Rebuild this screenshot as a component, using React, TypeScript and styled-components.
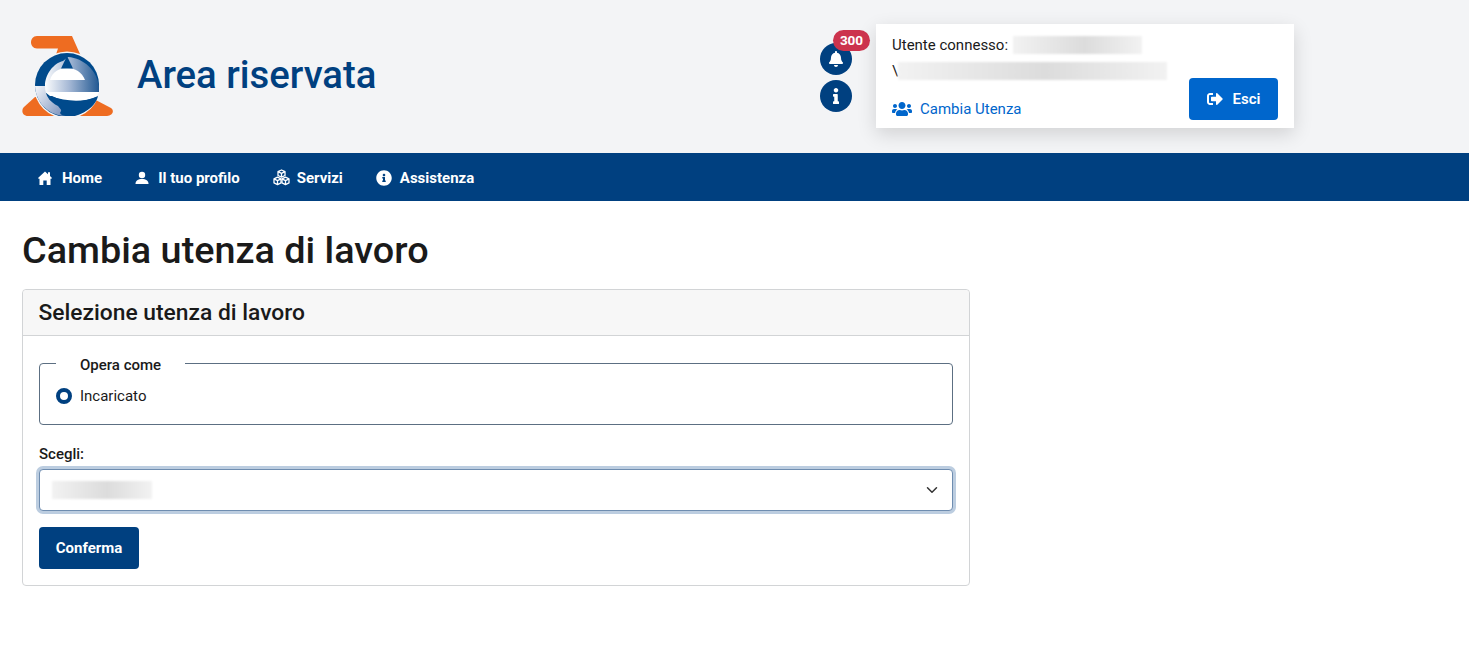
import React from "react";
import styled, { createGlobalStyle } from "styled-components";
import { FaBell, FaInfo, FaInfoCircle, FaSignOutAlt, FaUsers } from "react-icons/fa";
import { ChevronDown } from "lucide-react";

const NAVY = "#004080";
const BLUE = "#0066cc";
const INK = "#1a1a1a";

const GlobalStyle = createGlobalStyle`
  html, body {
    margin: 0;
    background: #fff;
    color: ${INK};
    font-family: "Roboto", "Liberation Sans", sans-serif;
    font-size: 16px;
  }
  * { box-sizing: border-box; }
`;

const Header = styled.header`
  height: 153px;
  background: #f3f4f6;
  display: grid;
  grid-template-columns: 798px 56px 418px;
  padding: 24px 0 0 22px;
`;

const Brand = styled.div`
  display: flex;
  align-items: flex-start;
  padding-top: 12px;
  gap: 24px;
`;

const SiteTitle = styled.h1`
  margin: 15px 0 0;
  font-size: 38.3px;
  line-height: 48px;
  font-weight: 500;
  color: ${NAVY};
`;

const Alerts = styled.div`
  display: flex;
  flex-direction: column;
  gap: 5px;
  padding-top: 19px;
`;

const RoundButton = styled.span`
  position: relative;
  width: 32px;
  height: 32px;
  border-radius: 50%;
  background: ${NAVY};
  color: #fff;
  display: flex;
  align-items: center;
  justify-content: center;
  font-size: 16px;
`;

const Badge = styled.span`
  position: absolute;
  left: 13px;
  top: -13px;
  width: 37px;
  height: 21px;
  border-radius: 11px;
  background: #cc334d;
  color: #fff;
  font-size: 13.5px;
  font-weight: 700;
  line-height: 21px;
  text-align: center;
`;

const UserPanel = styled.section`
  height: 104px;
  background: #fff;
  box-shadow: 0 6px 18px rgba(0, 0, 0, 0.14);
  padding: 9px 16px 8px;
  display: flex;
  justify-content: space-between;
  align-items: flex-end;
`;

const UserInfo = styled.div`
  display: flex;
  flex-direction: column;
  align-items: flex-start;
`;

const UserLine = styled.div<{ $tall?: boolean }>`
  display: flex;
  align-items: center;
  height: ${(p) => (p.$tall ? 30 : 22)}px;
  font-size: 15px;
  white-space: nowrap;
`;

const Redacted = styled.span<{ $w: number; $gap?: number }>`
  display: inline-block;
  width: ${(p) => p.$w}px;
  height: 18px;
  margin-left: ${(p) => p.$gap ?? 0}px;
  background: linear-gradient(90deg, #f2f2f2, #e6e6e6 30%, #dcdcdc 55%, #e8e8e8 80%, #f2f2f2);
  filter: blur(0.8px);
`;

const SwitchLink = styled.a`
  margin-top: 12px;
  display: flex;
  align-items: center;
  gap: 8px;
  color: ${BLUE};
  font-size: 15px;
  line-height: 22px;
`;

const ExitButton = styled.button`
  width: 89px;
  height: 42px;
  border: 0;
  border-radius: 4px;
  background: ${BLUE};
  color: #fff;
  font: 600 15px "Roboto", sans-serif;
  display: flex;
  align-items: center;
  justify-content: center;
  gap: 10px;
`;

const NavBar = styled.nav`
  height: 48px;
  background: ${NAVY};
  display: flex;
  align-items: center;
  padding: 1px 0 0 38px;
  gap: 33px;
`;

const NavLink = styled.a<{ $gap?: number }>`
  display: flex;
  align-items: center;
  gap: ${(p) => p.$gap ?? 8}px;
  color: #fff;
  font-size: 15px;
  font-weight: 700;
`;

const Main = styled.main`
  padding: 25px 22px 0;
  width: 992px;
`;

const PageTitle = styled.h2`
  margin: 0 0 15px;
  font-size: 37.8px;
  line-height: 48px;
  font-weight: 500;
  color: ${INK};
`;

const Card = styled.section`
  border: 1px solid #d2d4d6;
  border-radius: 4px;
`;

const CardHeader = styled.h3`
  margin: 0;
  height: 46px;
  padding: 0 15.5px;
  background: #f7f7f7;
  border-bottom: 1px solid #d2d4d6;
  border-radius: 4px 4px 0 0;
  font-size: 22.8px;
  font-weight: 500;
  line-height: 46px;
`;

const CardBody = styled.div`
  padding: 14px 16px 16px;
`;

const RoleFieldset = styled.fieldset`
  margin: 0;
  height: 75px;
  padding: 0 16px;
  border: 1px solid #5c6f82;
  border-radius: 4px;
`;

const RoleLegend = styled.legend`
  padding: 4px 24px 0;
  font-size: 15px;
  font-weight: 500;
  line-height: 22px;
`;

const RadioRow = styled.label`
  display: flex;
  align-items: center;
  gap: 8px;
  font-size: 15px;
  line-height: 22px;
  margin-top: 9px;
`;

const RadioDot = styled.span`
  width: 16px;
  height: 16px;
  border-radius: 50%;
  border: 4.5px solid ${NAVY};
  background: #fff;
`;

const FieldLabel = styled.div`
  margin-top: 18px;
  font-size: 15px;
  font-weight: 500;
  line-height: 22px;
`;

const SelectBox = styled.div`
  margin-top: 4px;
  height: 42px;
  border: 1px solid #6f8db0;
  border-radius: 4px;
  box-shadow: 0 0 0 3px #bccde0;
  background: #fff;
  display: flex;
  align-items: center;
  justify-content: space-between;
  padding: 0 11px 0 12px;
  color: #333;
`;

const ConfirmButton = styled.button`
  display: block;
  margin-top: 16px;
  width: 100px;
  height: 42px;
  border: 0;
  border-radius: 4px;
  background: ${NAVY};
  color: #fff;
  font: 700 15px "Roboto", sans-serif;
`;

const HomeIcon = () => (
  <svg width="14" height="14" viewBox="0 0 14 14" fill="#fff">
    <path d="M7 0.5L10 3.2V1.2H12V5L14 7L13 8L12.5 7.6V14H8.7V9.5H5.3V14H1.5V7.6L1 8L0 7Z" />
  </svg>
);

const UserIcon = () => (
  <svg width="14" height="14" viewBox="0 0 14 14" fill="#fff">
    <circle cx="7" cy="4" r="3.2" />
    <path d="M0.5 13C0.5 9.6 3 8 7 8C11 8 13.5 9.6 13.5 13Z" />
  </svg>
);

const CubesIcon = () => (
  <svg width="17" height="17" viewBox="0 0 17 17" fill="none" stroke="#fff" strokeWidth="1.3" strokeLinejoin="round">
    <path d="M8.5 1L12 2.7V6.5L8.5 8.2L5 6.5V2.7L8.5 1ZM5 2.7L8.5 4.4L12 2.7M8.5 4.4V8.2" />
    <path d="M4.5 8.2L8 9.9V13.9L4.5 15.7L1 13.9V9.9L4.5 8.2ZM1 9.9L4.5 11.6L8 9.9M4.5 11.6V15.7" />
    <path d="M12.5 8.2L16 9.9V13.9L12.5 15.7L9 13.9V9.9L12.5 8.2ZM9 9.9L12.5 11.6L16 9.9M12.5 11.6V15.7" />
  </svg>
);

const Logo = () => (
  <svg width="91" height="80" viewBox="0 0 91 80" aria-label="Logo">
    <defs>
      <linearGradient id="dome" gradientUnits="userSpaceOnUse" x1="22" x2="78" y1="0" y2="0">
        <stop offset="0" stopColor="#ffffff" />
        <stop offset="0.45" stopColor="#a5b8d5" />
        <stop offset="1" stopColor="#1d5590" />
      </linearGradient>
      <linearGradient id="lower" gradientUnits="userSpaceOnUse" x1="13" x2="44" y1="50" y2="72">
        <stop offset="0" stopColor="#f4f6fb" />
        <stop offset="1" stopColor="#8097bf" />
      </linearGradient>
    </defs>
    <path d="M15 0H50L66 36H28L36 12.5H15C7 12.5 7 0 15 0Z" fill="#ee6c21" />
    <path d="M13 61H68L89 72C93 75 90 80 85 80H6C0 80 -1 74 2 71Z" fill="#ee6c21" />
    <circle cx="45" cy="49" r="33.5" fill="#f3f4f6" />
    <circle cx="45" cy="49" r="32" fill="#004a8c" />
    <path d="M46 21C62 22 75 35 77 50L77 56H23V50C23 38 32 27 41 25Z" fill="url(#dome)" />
    <path d="M28 44C30 36 37 32 45 32C53 32 60 36 63 44Z" fill="#fff" />
    <path d="M45 20L51 32.5H39Z" fill="#004a8c" />
    <path d="M13 50H23C23 60 28 66 36 70L44 80C28 80 14 68 13 50Z" fill="url(#lower)" />
    <path d="M23 56H77L75 61C62 66 45 66 28 60Z" fill="#fff" />
    <path
      d="M30 60C42 67 62 67 76 60C74 70 62 80 44 80C41 80 39 79 38 77C42 72 36 65 28 64C26 62 27 60 30 60Z"
      fill="#004a8c"
    />
  </svg>
);

function App() {
  return (
    <>
      <GlobalStyle />
      <Header>
        <Brand>
          <Logo />
          <SiteTitle>Area riservata</SiteTitle>
        </Brand>
        <Alerts>
          <RoundButton>
            <FaBell />
            <Badge>300</Badge>
          </RoundButton>
          <RoundButton>
            <FaInfo />
          </RoundButton>
        </Alerts>
        <UserPanel>
          <UserInfo>
            <UserLine>
              Utente connesso:
              <Redacted $w={129} $gap={5} />
            </UserLine>
            <UserLine $tall>
              \<Redacted $w={269} />
            </UserLine>
            <SwitchLink>
              <FaUsers size={20} />
              Cambia Utenza
            </SwitchLink>
          </UserInfo>
          <ExitButton>
            <FaSignOutAlt size={16} />
            Esci
          </ExitButton>
        </UserPanel>
      </Header>
      <NavBar>
        <NavLink $gap={10}>
          <HomeIcon />
          Home
        </NavLink>
        <NavLink $gap={9}>
          <UserIcon />
          Il tuo profilo
        </NavLink>
        <NavLink $gap={7}>
          <CubesIcon />
          Servizi
        </NavLink>
        <NavLink>
          <FaInfoCircle size={16} />
          Assistenza
        </NavLink>
      </NavBar>
      <Main>
        <PageTitle>Cambia utenza di lavoro</PageTitle>
        <Card>
          <CardHeader>Selezione utenza di lavoro</CardHeader>
          <CardBody>
            <RoleFieldset>
              <RoleLegend>Opera come</RoleLegend>
              <RadioRow>
                <RadioDot />
                Incaricato
              </RadioRow>
            </RoleFieldset>
            <FieldLabel>Scegli:</FieldLabel>
            <SelectBox>
              <Redacted $w={100} />
              <ChevronDown size={18} />
            </SelectBox>
            <ConfirmButton>Conferma</ConfirmButton>
          </CardBody>
        </Card>
      </Main>
    </>
  );
}

export default App;
